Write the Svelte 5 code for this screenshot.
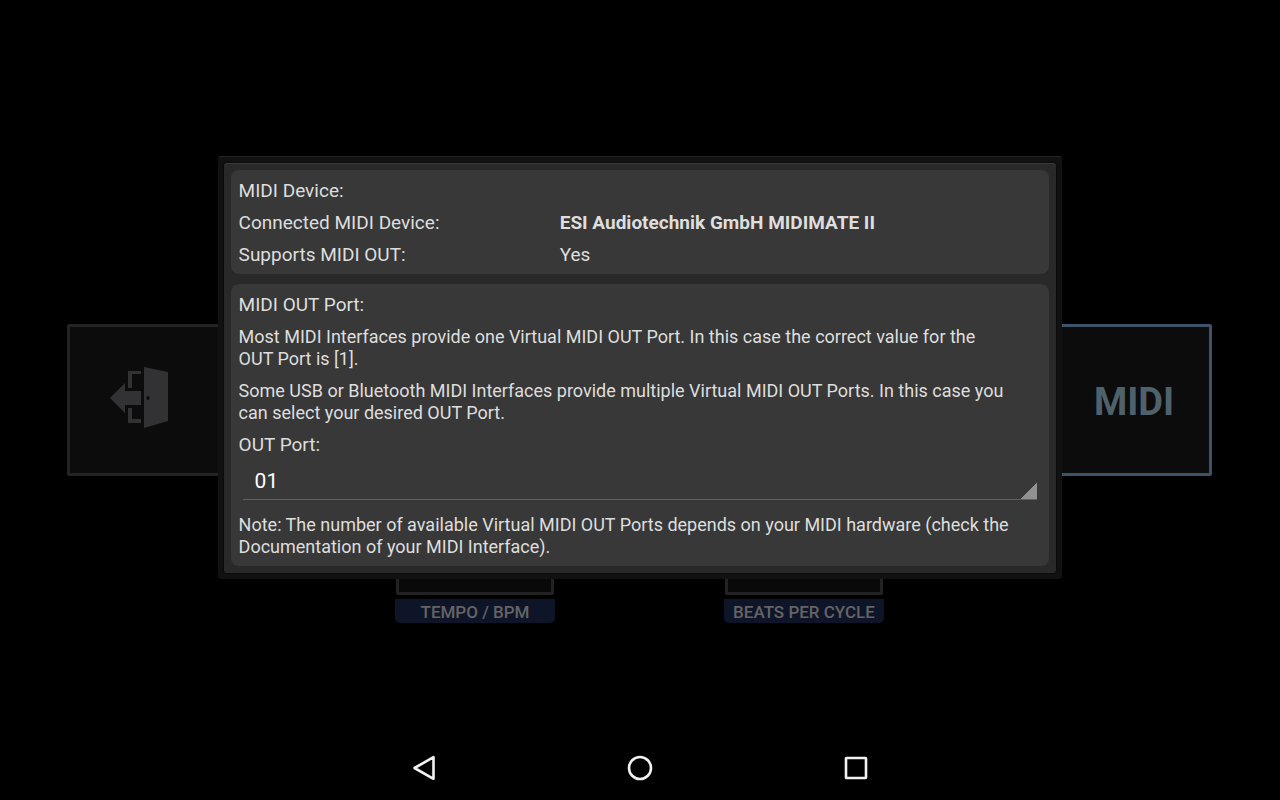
<script lang="ts">
  const device = "ESI Audiotechnik GmbH MIDIMATE II";
  const dials = ["TEMPO / BPM", "BEATS PER CYCLE"];
  const ports = ["01", "02", "03", "04"];

  let port = $state("01");
</script>

<main class="screen">
  <div class="stage">
    <button class="tile" aria-label="Exit">
      <svg width="70" height="68" viewBox="0 0 70 68" fill="#323234">
        <path d="M0 32 L15 17 V25 H31 V39 H15 V47 Z" />
        <path d="M18 22 V5 H31 V8 H22 V22 Z M18 42 H22 V53 H31 V57 H18 Z" />
        <path d="M34 1 L58 6 V55 L34 62 Z" />
        <ellipse cx="38" cy="32" rx="1.6" ry="2" fill="#0b0b0b" />
      </svg>
    </button>
    <div class="dials">
      {#each dials as dial}
        <div class="dial">
          <div class="dial-box"></div>
          <div class="dial-label">{dial}</div>
        </div>
      {/each}
    </div>
    <button class="tile active">MIDI</button>
  </div>

  <div class="overlay">
    <div class="dialog" role="dialog" aria-label="MIDI Device">
      <div class="dialog-body">
        <section class="card">
          <div>MIDI Device:</div>
          <div class="row">
            <span>Connected MIDI Device:</span>
            <b>{device}</b>
          </div>
          <div class="row">
            <span>Supports MIDI OUT:</span>
            <span>Yes</span>
          </div>
        </section>

        <section class="card">
          <div>MIDI OUT Port:</div>
          <p>
            Most MIDI Interfaces provide one Virtual MIDI OUT Port. In this case the correct value for the<br />
            OUT Port is [1].
          </p>
          <p>
            Some USB or Bluetooth MIDI Interfaces provide multiple Virtual MIDI OUT Ports. In this case you<br />
            can select your desired OUT Port.
          </p>
          <label for="port">OUT Port:</label>
          <select id="port" bind:value={port}>
            {#each ports as p}
              <option value={p}>{p}</option>
            {/each}
          </select>
          <p>
            Note: The number of available Virtual MIDI OUT Ports depends on your MIDI hardware (check the<br />
            Documentation of your MIDI Interface).
          </p>
        </section>
      </div>
    </div>
  </div>

  <nav class="navbar">
    <button aria-label="Back">
      <svg width="28" height="28" viewBox="0 0 28 28">
        <path d="M4.5 14 L23.5 3.2 V24.8 Z" />
      </svg>
    </button>
    <button aria-label="Home">
      <svg width="28" height="28" viewBox="0 0 28 28">
        <circle cx="14" cy="14" r="11" />
      </svg>
    </button>
    <button aria-label="Recent apps">
      <svg width="28" height="28" viewBox="0 0 28 28">
        <rect x="4" y="4" width="20" height="20" rx="0.5" />
      </svg>
    </button>
  </nav>
</main>

<style>
  :global(body) {
    margin: 0;
    background: #000;
    color: #dedede;
    font-family: Roboto, sans-serif;
    font-size: 19px;
    line-height: 22px;
  }

  button {
    padding: 0;
    border: 0;
    background: none;
    font-family: inherit;
  }

  .screen {
    display: grid;
    grid-template-columns: 1fr;
    grid-template-rows: 1fr 64px;
    min-height: 100vh;
  }

  /* instrument view, dimmed behind the dialog */
  .stage {
    grid-area: 1 / 1 / 3 / 2;
    display: flex;
    align-items: center;
    justify-content: space-between;
    padding: 0 68px 0 67px;
  }

  .tile {
    box-sizing: border-box;
    width: 156px;
    height: 152px;
    display: flex;
    align-items: center;
    justify-content: center;
    border: 3px solid #232323;
    border-radius: 2px;
    background: #0c0c0c;
  }

  .tile svg {
    display: block;
  }

  .tile.active {
    padding-top: 4px;
    border-color: #3e5269;
    color: #4f626c;
    font-size: 38px;
    font-weight: 700;
  }

  .dials {
    display: flex;
    gap: 169px;
  }

  .dial {
    width: 160px;
    display: flex;
    flex-direction: column;
    gap: 4px;
  }

  .dial-box {
    box-sizing: border-box;
    height: 418px;
    margin: 0 1px;
    border: 3px solid #222;
    border-radius: 2px;
    background: #090909;
  }

  .dial-label {
    height: 24px;
    border-radius: 0 0 5px 5px;
    background: #0f1528;
    color: #646464;
    font-size: 17px;
    font-weight: 500;
    line-height: 26px;
    text-align: center;
    white-space: nowrap;
  }

  .overlay {
    grid-area: 1 / 1 / 2 / 2;
    z-index: 1;
    display: flex;
    align-items: center;
    justify-content: center;
    padding-bottom: 2px;
  }

  .dialog {
    box-sizing: border-box;
    width: 66%;
    padding: 6px;
    border-top: 1px solid #242424;
    border-radius: 2px;
    background: #111;
  }

  .dialog-body {
    display: flex;
    flex-direction: column;
    gap: 10px;
    padding: 6px 7px 7px;
    border-top: 1px solid #3a3a3a;
    border-radius: 3px;
    background: #292929;
    box-shadow: 0 0 2px #000;
  }

  .card {
    display: flex;
    flex-direction: column;
    gap: 10px;
    padding: 10px 8px 8px;
    border-radius: 8px;
    background: #383838;
  }

  .card p {
    margin: 0;
    font-size: 18px;
  }

  .row {
    display: grid;
    grid-template-columns: 2fr 3fr;
  }

  select {
    appearance: none;
    height: 34px;
    margin: 0 4px 4px;
    padding: 0 12px 2px;
    border: 0;
    border-bottom: 1px solid #606060;
    border-radius: 0;
    background: linear-gradient(135deg, transparent 50%, #919191 50%) right bottom / 16px 16px no-repeat;
    color: #fff;
    font-family: inherit;
    font-size: 21px;
  }

  .navbar {
    grid-area: 2 / 1 / 3 / 2;
    z-index: 1;
    display: flex;
    align-items: center;
    justify-content: center;
    gap: 188px;
  }

  .navbar svg {
    display: block;
    fill: none;
    stroke: #f2f2f2;
    stroke-width: 2.6;
    stroke-linejoin: round;
  }
</style>
